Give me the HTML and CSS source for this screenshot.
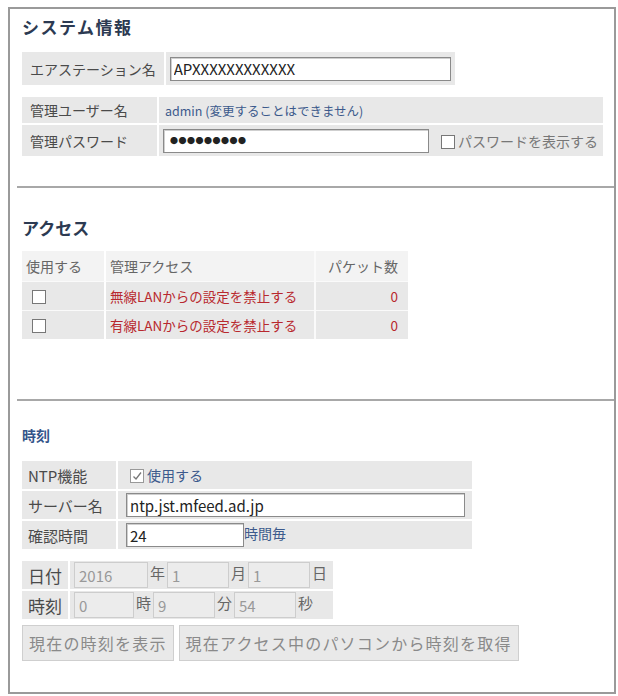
FILE: index.html
```html
<!DOCTYPE html>
<html lang="ja">
  <head>
    <meta charset="UTF-8" />
    <title>システム情報</title>
    <link rel="stylesheet" href="styles.css">
  </head>
  <body>
    <div class="frame">
      <section class="block first">
        <h2 class="title wide-title">システム情報</h2>
        <table class="grid station">
          <tr>
            <th>エアステーション名</th>
            <td><input class="field wide" type="text" value="APXXXXXXXXXXXX" /></td>
          </tr>
        </table>
        <table class="grid admin">
          <tr>
            <th>管理ユーザー名</th>
            <td colspan="2" class="note">admin (変更することはできません)</td>
          </tr>
          <tr>
            <th>管理パスワード</th>
            <td><input class="field pass" type="text" value="●●●●●●●●●" /></td>
            <td class="show"><span class="box"></span>パスワードを表示する</td>
          </tr>
        </table>
      </section>

      <section class="block access">
        <h2 class="title">アクセス</h2>
        <table class="grid list">
          <tr class="head">
            <td class="c-use">使用する</td>
            <td class="c-name">管理アクセス</td>
            <td class="c-count">パケット数</td>
          </tr>
          <tr>
            <td class="c-use"><span class="box"></span></td>
            <td class="c-name red">無線LANからの設定を禁止する</td>
            <td class="c-count red">0</td>
          </tr>
          <tr>
            <td class="c-use"><span class="box"></span></td>
            <td class="c-name red">有線LANからの設定を禁止する</td>
            <td class="c-count red">0</td>
          </tr>
        </table>
      </section>

      <section class="block clock">
        <h2 class="title small">時刻</h2>
        <table class="grid ntp">
          <tr>
            <th>NTP機能</th>
            <td class="check"><span class="box checked"><svg viewBox="0 0 12 12" width="12" height="12"><path d="M2.5 6.5 L5 9 L10 2.5" fill="none" stroke="#777" stroke-width="1.3"/></svg></span>使用する</td>
          </tr>
          <tr>
            <th>サーバー名</th>
            <td><input class="field server" type="text" value="ntp.jst.mfeed.ad.jp" /></td>
          </tr>
          <tr>
            <th>確認時間</th>
            <td><input class="field hours" type="text" value="24" /><span class="unit blue">時間毎</span></td>
          </tr>
        </table>
        <table class="grid date">
          <tr>
            <th>日付</th>
            <td>
              <input class="off y" type="text" value="2016" disabled /><span class="unit">年</span><input class="off" type="text" value="1" disabled /><span class="unit">月</span><input class="off" type="text" value="1" disabled /><span class="unit">日</span>
            </td>
          </tr>
          <tr>
            <th>時刻</th>
            <td>
              <input class="off h" type="text" value="0" disabled /><span class="unit">時</span><input class="off" type="text" value="9" disabled /><span class="unit">分</span><input class="off" type="text" value="54" disabled /><span class="unit">秒</span>
            </td>
          </tr>
        </table>
        <div class="buttons">
          <button class="btn" disabled>現在の時刻を表示</button>
          <button class="btn" disabled>現在アクセス中のパソコンから時刻を取得</button>
        </div>
      </section>
    </div>
  </body>
</html>
```

FILE: styles.css
```css
html,
body {
  margin: 0;
  background: #fff;
}
body {
  font-family: "Noto Sans CJK JP", "Liberation Sans", sans-serif;
  font-size: 14px;
  color: #4a4a4a;
}
.frame {
  box-sizing: border-box;
  width: 608px;
  height: 687px;
  margin: 7px 0 0 8px;
  border: 2px solid #9a9a9a;
}
.block {
  margin-left: 7px;
  padding-left: 5px;
}
.block + .block {
  border-top: 2px solid #a8a8a8;
}
.first {
  height: 177px;
  padding-top: 6px;
  box-sizing: border-box;
}
.access {
  height: 213px;
  box-sizing: border-box;
  padding-top: 28px;
}
.clock {
  padding-top: 22px;
}
.title {
  margin: 0;
  font-size: 17px;
  line-height: 24px;
  color: #2c3a52;
  font-weight: bold;
}
.wide-title {
  letter-spacing: 1.5px;
}
.title.small {
  font-size: 14px;
  color: #34558a;
}

.grid {
  border-collapse: separate;
  border-spacing: 0 2px;
}
.grid th,
.grid td {
  background: #e8e8e8;
  padding: 0 4px;
  font-weight: normal;
  text-align: left;
  white-space: nowrap;
}
.grid th {
  padding: 0 8px;
  border-right: 2px solid #fff;
}

/* system */
.station {
  margin-top: 11px;
}
.station th,
.station td {
  height: 33px;
}
.admin {
  margin-top: 8px;
}
.admin th {
  width: 119px;
}
.admin tr:first-child th,
.admin tr:first-child td {
  height: 26px;
}
.admin tr + tr th,
.admin tr + tr td {
  height: 31px;
}
.note {
  color: #3c5a8c;
  font-size: 12.5px;
  padding-left: 6px !important;
}
.show {
  font-size: 14px;
  color: #777;
  padding: 0 5px 0 8px !important;
}

.field {
  box-sizing: border-box;
  height: 24px;
  border: 1px solid #8a8a8a;
  box-shadow: inset 1px 1px 0 #cfcfcf;
  font: inherit;
  font-size: 15px;
  color: #222;
  padding: 0 3px;
  background: #fff;
  vertical-align: middle;
}
.wide {
  width: 281px;
}
.pass {
  width: 266px;
  font-size: 8px;
  letter-spacing: 0.5px;
  padding-left: 6px;
}
.box {
  display: inline-block;
  box-sizing: border-box;
  width: 14px;
  height: 14px;
  border: 1px solid #777;
  background: #fff;
  vertical-align: -2px;
  margin-right: 3px;
}
.box svg {
  display: block;
}

/* access */
.list {
  margin-top: 11px;
  width: 386px;
  border-spacing: 0;
}
.list td {
  height: 28px;
  padding: 0 4px;
}
.list .head td {
  background: #f3f3f3;
  color: #666;
  height: 30px;
}
.list tr + tr td {
  border-top: 1px solid #fafafa;
}
.c-use {
  width: 68px;
  border-right: 2px solid #fff;
}
.list tr:not(.head) .c-use {
  padding-left: 10px;
}
.c-name {
  width: 200px;
  border-right: 2px solid #fafafa;
}
.c-count {
  text-align: right !important;
  padding-right: 10px !important;
}
.red {
  color: #b8282e;
  font-size: 13.5px;
}

/* clock */
.ntp {
  margin-top: 12px;
  width: 450px;
}
.ntp th {
  width: 82px;
  font-size: 15px;
  padding: 0 6px;
  color: #4a4a4a;
}
.ntp th,
.ntp td {
  height: 28px;
}
.ntp td {
  padding-left: 8px;
}
.check {
  color: #3c5a8c;
  padding-left: 12px !important;
}
.check .box {
  border-color: #999;
}
.server {
  width: 339px;
}
.hours {
  width: 118px;
}
.unit {
  color: #666;
  margin: 0 2px 0 2px;
}
.unit.blue {
  color: #3c5a8c;
  margin: 0;
}
.date {
  margin-top: 8px;
}
.date th {
  font-size: 17px;
  padding: 0 6px;
  color: #4a4a4a;
}
.date th,
.date td {
  height: 28px;
}
.date td {
  padding: 0 4px;
  font-size: 15px;
}
.off {
  box-sizing: border-box;
  width: 62px;
  height: 26px;
  border: 1px solid #cdcdcd;
  background: #ececec;
  color: #999;
  font: inherit;
  font-size: 15px;
  padding: 0 4px;
  vertical-align: middle;
}
.off.y {
  width: 74px;
}
.off.h {
  width: 60px;
}
.buttons {
  display: flex;
  gap: 5px;
  margin-top: 4px;
}
.btn {
  height: 36px;
  padding: 0 6px;
  border: 1px solid #cfcfcf;
  background: #e9e9e9;
  color: #8a8a8a;
  font-family: inherit;
  font-size: 16px;
  letter-spacing: 1.2px;
}
```
